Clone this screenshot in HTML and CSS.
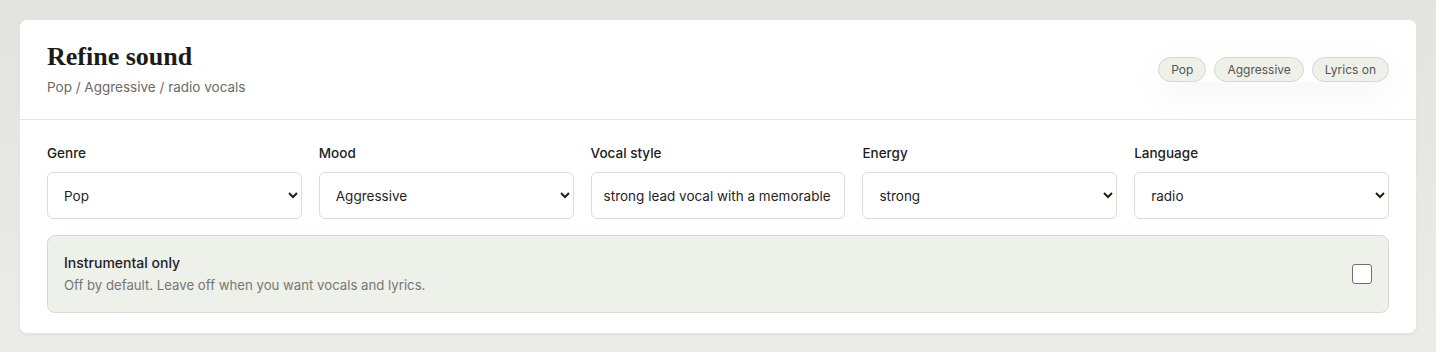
FILE: index.html
```html
<!DOCTYPE html>
<html lang="en">
<head>
<meta charset="utf-8">
<title>Refine sound</title>
<link rel="stylesheet" href="styles.css">
</head>
<body>
<section class="card">
  <header class="card-head">
    <div class="head-text">
      <h1 class="title">Refine sound</h1>
      <p class="subtitle">Pop / Aggressive / radio vocals</p>
    </div>
    <div class="pills">
      <span class="pill">Pop</span>
      <span class="pill">Aggressive</span>
      <span class="pill">Lyrics on</span>
    </div>
  </header>
  <div class="card-body">
    <div class="fields">
      <label class="field">
        <span class="label">Genre</span>
        <select class="control">
          <option>Pop</option>
          <option>Rock</option>
          <option>Hip hop</option>
        </select>
      </label>
      <label class="field">
        <span class="label">Mood</span>
        <select class="control">
          <option>Aggressive</option>
          <option>Calm</option>
          <option>Happy</option>
        </select>
      </label>
      <label class="field">
        <span class="label">Vocal style</span>
        <input class="control text" type="text" value="strong lead vocal with a memorable hook">
      </label>
      <label class="field">
        <span class="label">Energy</span>
        <select class="control">
          <option>strong</option>
          <option>medium</option>
          <option>low</option>
        </select>
      </label>
      <label class="field">
        <span class="label">Language</span>
        <select class="control">
          <option>radio</option>
          <option>English</option>
        </select>
      </label>
    </div>
    <label class="toggle-box">
      <span class="toggle-text">
        <span class="toggle-title">Instrumental only</span>
        <span class="toggle-desc">Off by default. Leave off when you want vocals and lyrics.</span>
      </span>
      <input class="check" type="checkbox">
    </label>
  </div>
</section>
</body>
</html>
```
FILE: styles.css
```css
* { box-sizing: border-box; }
html, body { margin: 0; padding: 0; }
body {
  background: linear-gradient(180deg, #e3e4df 0%, #ebece7 100%);
  font-family: Inter, "Noto Sans", sans-serif;
  color: #1f1f1d;
  padding: 19px;
  min-height: 352px;
}
.card {
  background: #fff;
  border: 1px solid #e6e7e2;
  border-radius: 8px;
  box-shadow: 0 1px 3px rgba(0,0,0,0.05);
}
.card-head {
  display: flex;
  align-items: center;
  justify-content: space-between;
  padding: 22px 27px 22px;
  border-bottom: 1px solid #e4e5e0;
}
.title {
  margin: 0;
  font-family: "Liberation Serif", "DejaVu Serif", serif;
  font-weight: 700;
  font-size: 26px;
  line-height: 30px;
  color: #1b1b19;
}
.subtitle {
  margin: 5px 0 0;
  font-size: 13.5px;
  line-height: 20px;
  color: #6a6a66;
}
.pills {
  display: flex;
  gap: 8px;
  box-shadow: 0 10px 36px rgba(0,0,0,0.05);
  border-radius: 14px;
}
.pill {
  display: inline-block;
  height: 25px;
  line-height: 23px;
  padding: 0 12px;
  border: 1px solid #d5d8d0;
  background: #eef0ea;
  border-radius: 13px;
  font-size: 12px;
  color: #55554f;
}
.card-body {
  padding: 24px 27px 20px;
}
.fields {
  display: grid;
  grid-template-columns: repeat(5, 1fr);
  gap: 17px;
}
.field {
  display: flex;
  flex-direction: column;
  gap: 10px;
}
.label {
  font-size: 13.5px;
  line-height: 18px;
  font-weight: 500;
  color: #222220;
}
.control {
  height: 47px;
  width: 100%;
  border: 1px solid #dcddd8;
  border-radius: 6px;
  background: #fff;
  font-family: Inter, "Noto Sans", sans-serif;
  font-size: 13.5px;
  color: #1f1f1d;
  padding: 0 8px 0 12px;
}
.control.text {
  padding: 0 12px;
}
.toggle-box {
  margin-top: 16px;
  display: flex;
  align-items: center;
  justify-content: space-between;
  background: #eef0ea;
  border: 1px solid #d7d9d2;
  border-radius: 8px;
  padding: 16px;
  height: 78px;
}
.toggle-text {
  display: flex;
  flex-direction: column;
  gap: 4px;
}
.toggle-title {
  font-size: 14px;
  line-height: 18px;
  font-weight: 500;
  color: #222220;
}
.toggle-desc {
  font-size: 13.2px;
  line-height: 18px;
  color: #777772;
}
.check {
  appearance: none;
  -webkit-appearance: none;
  width: 20px;
  height: 20px;
  margin: 0;
  border: 1px solid #6f706b;
  border-radius: 3px;
  background: #fff;
}
```
